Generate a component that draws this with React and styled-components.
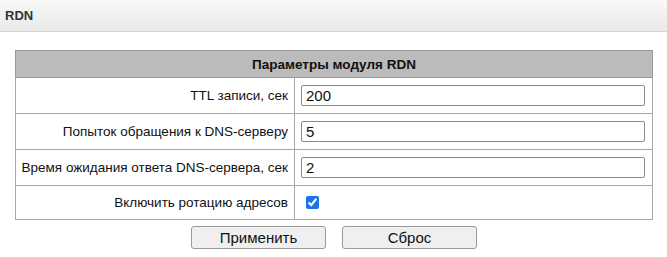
import React from "react";
import styled, { createGlobalStyle } from "styled-components";

const Global = createGlobalStyle`
  html, body { margin: 0; padding: 0; background: #fff; }
  body { font-family: "Liberation Sans", Arial, sans-serif; color: #222; }
`;

const TopBar = styled.div`
  height: 31px;
  border-bottom: 1px solid #d6d6d6;
  background: linear-gradient(#f9f9f9, #e9e9e9);
  display: flex;
  align-items: center;
  padding-left: 5px;
  font-size: 13px;
  font-weight: bold;
  color: #333;
`;

const Content = styled.div`
  padding: 18px 14px 0 15px;
`;

const Table = styled.table`
  width: 100%;
  border-collapse: collapse;
  font-size: 13.5px;
`;

const HeadCell = styled.th`
  background: #bbbbbb;
  border: 1px solid #999;
  height: 26px;
  padding: 0;
  font-weight: bold;
  font-size: 13.5px;
  color: #111;
`;

const LabelCell = styled.td`
  border: 1px solid #a8a8a8;
  text-align: right;
  white-space: nowrap;
  padding: 0 6px 0 4px;
  width: 268px;
  height: ${(p) => p.$h}px;
  color: #111;
`;

const ValueCell = styled.td`
  border: 1px solid #a8a8a8;
  padding: 0 7px 0 6px;
`;

const TextInput = styled.input`
  box-sizing: border-box;
  width: 100%;
  height: 21px;
  border: 1px solid #8a8a8a;
  border-radius: 2px;
  padding: 0 4px;
  font-family: "Liberation Sans", Arial, sans-serif;
  font-size: 15px;
  color: #111;
  display: block;
`;

const Check = styled.input`
  margin: 0 0 0 5px;
  width: 13px;
  height: 13px;
  display: block;
  accent-color: #1a73e8;
`;

const Buttons = styled.div`
  display: flex;
  justify-content: center;
  gap: 16px;
  margin-top: 6px;
`;

const Button = styled.button`
  width: 135px;
  height: 23px;
  background: #efefef;
  border: 1px solid #9a9a9a;
  border-radius: 3px;
  font-family: "Liberation Sans", Arial, sans-serif;
  font-size: 15px;
  color: #111;
  padding: 0;
`;

const rows = [
  { label: "TTL записи, сек", value: "200" },
  { label: "Попыток обращения к DNS-серверу", value: "5" },
  { label: "Время ожидания ответа DNS-сервера, сек", value: "2" },
];

export default function App() {
  return (
    <>
      <Global />
      <TopBar>RDN</TopBar>
      <Content>
        <Table>
          <thead>
            <tr>
              <HeadCell colSpan={2}>Параметры модуля RDN</HeadCell>
            </tr>
          </thead>
          <tbody>
            {rows.map((r) => (
              <tr key={r.label}>
                <LabelCell $h={35}>{r.label}</LabelCell>
                <ValueCell>
                  <TextInput defaultValue={r.value} />
                </ValueCell>
              </tr>
            ))}
            <tr>
              <LabelCell $h={33}>Включить ротацию адресов</LabelCell>
              <ValueCell>
                <Check type="checkbox" defaultChecked />
              </ValueCell>
            </tr>
          </tbody>
        </Table>
        <Buttons>
          <Button>Применить</Button>
          <Button>Сброс</Button>
        </Buttons>
      </Content>
    </>
  );
}
